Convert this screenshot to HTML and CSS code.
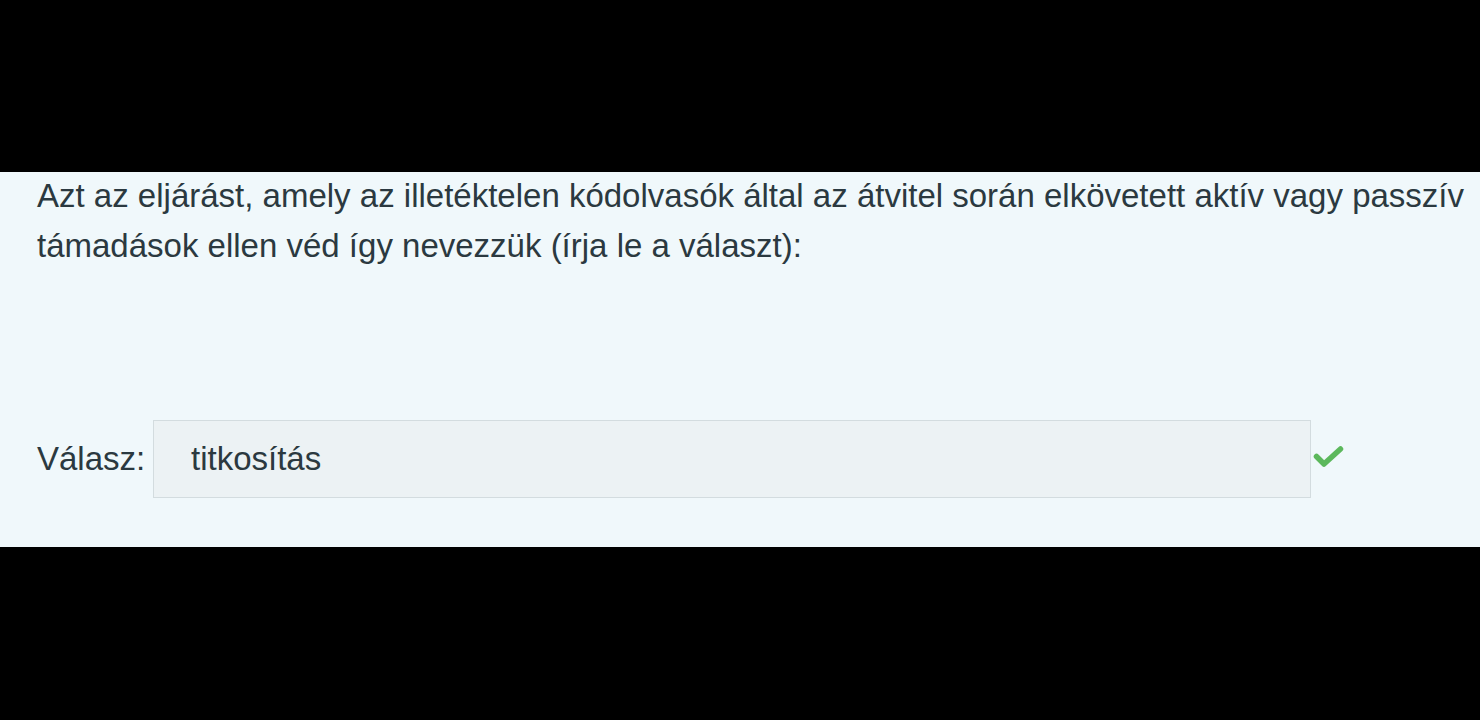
FILE: index.html
```html
<!DOCTYPE html>
<html lang="hu">
<head>
<meta charset="utf-8">
<link rel="stylesheet" href="styles.css">
</head>
<body>
<div class="screen">
  <div class="bar"></div>
  <div class="panel">
    <p class="question">Azt az eljárást, amely az illetéktelen kódolvasók által az átvitel során elkövetett aktív vagy passzív támadások ellen véd így nevezzük (írja le a választ):</p>
    <div class="answer">
      <label class="label">Válasz:</label>
      <div class="field">titkosítás</div>
      <svg class="check" viewBox="0 0 32 26" width="32" height="26"><path d="M4.5 12.5 L12 20 L28.5 5" fill="none" stroke="#5cb85c" stroke-width="5.5" stroke-linecap="round" stroke-linejoin="round"/></svg>
    </div>
  </div>
  <div class="bar bottom"></div>
</div>
</body>
</html>
```
FILE: styles.css
```css
html, body { margin: 0; padding: 0; background: #000; }
.screen { width: 1480px; height: 720px; display: flex; flex-direction: column; overflow: hidden; }
.bar { height: 172px; background: #000; flex: none; }
.bar.bottom { flex: 1; }
.panel { height: 375px; background: #f0f8fb; padding: 0 0 0 37px; box-sizing: border-box; font-family: "Liberation Sans", Arial, sans-serif; color: #2b3940; flex: none; }
.question { margin: -1px 0 0 0; font-size: 33px; line-height: 50px; width: 1440px; }
.answer { display: flex; align-items: center; margin-top: 149px; }
.label { font-size: 33px; width: 116px; flex: none; }
.field { width: 1119px; height: 76px; border: 1px solid #d3dcdf; background: #ecf2f4; font-size: 33px; line-height: 76px; padding-left: 37px; flex: none; }
.check { margin-left: 1px; margin-top: -4px; }
```
